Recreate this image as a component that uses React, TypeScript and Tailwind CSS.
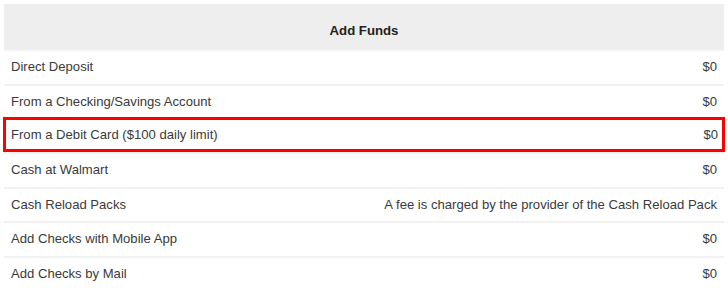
import React from "react";

type Row = { label: string; value: string; highlight?: boolean };

const rows: Row[] = [
  { label: "Direct Deposit", value: "$0" },
  { label: "From a Checking/Savings Account", value: "$0" },
  { label: "From a Debit Card ($100 daily limit)", value: "$0", highlight: true },
  { label: "Cash at Walmart", value: "$0" },
  { label: "Cash Reload Packs", value: "A fee is charged by the provider of the Cash Reload Pack" },
  { label: "Add Checks with Mobile App", value: "$0" },
  { label: "Add Checks by Mail", value: "$0" },
];

export default function App() {
  return (
    <div
      className="w-[728px] h-[294px] bg-white px-[4px] pt-[4px] overflow-hidden text-[#3a3a3a]"
      style={{ fontFamily: '"Liberation Sans", Arial, sans-serif' }}
    >
      <div className="h-[45px] bg-[#eeeeee] flex items-center justify-center pt-[9px] text-[13.2px] font-bold text-[#222222]">
        Add Funds
      </div>
      <div className="flex flex-col">
        {rows.map((r) => (
          <div
            key={r.label}
            className={
              r.highlight
                ? "h-[35px] flex items-center justify-between pl-[5px] pr-[4px] -mx-px text-[13.1px] border-[3px] border-[#ff0000] -mt-px"
                : "h-[34.5px] flex items-center justify-between px-[7px] text-[13.1px] border-t-2 border-[#f2f2f2]"
            }
          >
            <span>{r.label}</span>
            <span>{r.value}</span>
          </div>
        ))}
      </div>
    </div>
  );
}
